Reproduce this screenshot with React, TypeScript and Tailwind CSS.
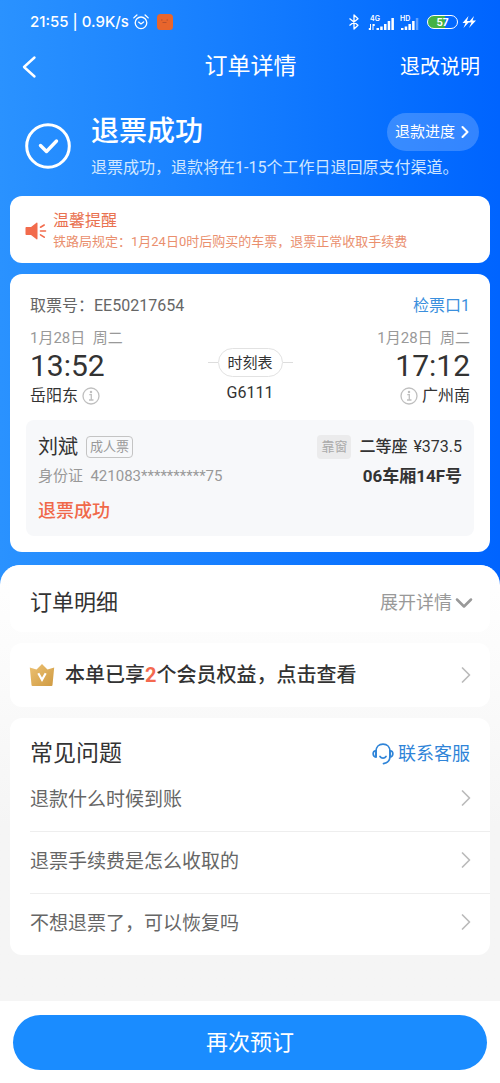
import { ChevronDown, ChevronRight } from "lucide-react";

const faqs = [
  "退款什么时候到账",
  "退票手续费是怎么收取的",
  "不想退票了\uFF0C可以恢复吗",
];

function StatusBar() {
  return (
    <div className="flex h-11 items-center justify-between pr-6 pl-[30px]">
      <div className="flex items-center gap-1">
        <span className="font-['Inter'] text-[15px] font-medium">
          21:55 | 0.9K/s
        </span>
        <svg viewBox="0 0 16 16" className="h-4 w-4" fill="none" stroke="currentColor" strokeWidth="1.3" strokeLinecap="round" aria-hidden>
          <circle cx="8" cy="8.8" r="5.8" />
          <path d="M.8 3.9 3.9 1M15.2 3.9 12.1 1M5.6 8.1 8 10l2.6-2" />
        </svg>
        <svg viewBox="0 0 16 16" className="ml-1 h-4 w-4" aria-hidden>
          <rect width="16" height="16" rx="3.5" fill="#e8652c" />
          <path d="M4 6h1.500M9.500 6H11M5.500 8.500h4" stroke="#b8502c" strokeWidth="1.2" />
        </svg>
      </div>

      <div className="flex items-center">
        <svg viewBox="0 0 12 16" className="h-4 w-3" fill="none" stroke="currentColor" strokeWidth="1.3" strokeLinejoin="round" aria-hidden>
          <path d="M1.5 4.5 10 11.2 6 15V1l4 3.8-8.5 6.7" />
        </svg>
        <div className="ml-2 flex flex-col font-['Inter'] text-[7px] leading-[7px] font-semibold">
          <span className="pl-0.5">4G</span>
          <svg viewBox="0 0 26 12" className="-mt-1 h-3 w-[26px]" fill="currentColor" aria-hidden>
            <path d="M2 6h1v6H2zM.8 10H2v2H.8zM4.500 6h1v6h-1zM5.500 6h1.200v2H5.500zM8.500 10H11v2H8.500zM12.200 8.500h2.500V12h-2.500zM16 6h2.500v6H16zM19.700 3h2.500v9h-2.500zM23.400 0h2.500v12h-2.500z" />
          </svg>
        </div>
        <div className="ml-1.5 flex flex-col font-['Inter'] text-[7px] leading-[7px] font-semibold">
          <span>HD</span>
          <svg viewBox="0 0 19 12" className="-mt-1 h-3 w-[19px]" fill="currentColor" aria-hidden>
            <path d="M1 10h2.500v2H1zM4.700 8.500h2.500V12H4.700zM8.400 6h2.500v6H8.400zM12.100 3h2.500v9h-2.500z" />
            <path d="M15.800 0h2.500v12h-2.500z" opacity=".35" />
          </svg>
        </div>
        <div className="ml-2 flex h-[14px] w-[31px] items-center justify-center rounded-full border border-white bg-linear-to-r from-[#44b244] from-57% to-transparent to-57% font-['Inter'] text-[10px] leading-none font-bold">
          57
        </div>
        <svg viewBox="0 0 14 12" className="ml-1 h-3 w-[14px]" fill="currentColor" aria-hidden>
          <path d="M6.500 0 .5 7h3L1.500 12 8 5H5zM12 0 6.500 6.500h3L7 12l7-7.500h-3.500z" />
        </svg>
      </div>
    </div>
  );
}

function InfoIcon() {
  return (
    <svg viewBox="0 0 18 18" className="h-[18px] w-[18px]" fill="none" stroke="#bfbfbf" strokeWidth="1.3" aria-hidden>
      <circle cx="9" cy="9" r="8" />
      <path d="M7.300 7.700H9.300V13M7 13h4.500" />
      <circle cx="9" cy="5" r=".6" fill="#bfbfbf" />
    </svg>
  );
}

function Notice() {
  return (
    <section className="mx-2.5 flex items-center gap-1.5 rounded-xl bg-white pt-3.5 pb-3 pl-[15px]">
      <svg viewBox="0 0 22 20" className="h-5 w-[22px]" fill="#f26b4c" aria-hidden>
        <path d="M1.500 6H6l5.500-4.200c.5-.4 1-.1 1 .5v15.400c0 .6-.5.900-1 .5L6 14H1.500C.9 14 .5 13.600.5 13V7c0-.6.4-1 1-1z" />
        <path d="M15.500 6.200 19.200 4M15.500 10h5M15.500 13.800l3.700 2.400" stroke="#f26b4c" strokeWidth="1.600" strokeLinecap="round" />
      </svg>
      <div>
        <h2 className="text-base leading-[22px] text-[#e9714f]">温馨提醒</h2>
        <p className="text-[13px] leading-[19px] text-[#ea8f6e]">
          铁路局规定&#xFF1A;1月24日0时后购买的车票&#xFF0C;退票正常收取手续费
        </p>
      </div>
    </section>
  );
}

function Ticket() {
  return (
    <section className="mx-2.5 mt-[11px] rounded-xl bg-white px-4 pt-5 pb-4 text-[#333]">
      <div className="flex justify-between px-1 text-base leading-6">
        <span className="text-[#666]">取票号&#xFF1A;EE50217654</span>
        <a href="#gate" className="text-[#3a8fdd]">检票口1</a>
      </div>

      <div className="mt-2.5 flex justify-between px-1">
        <div className="flex-1">
          <p className="text-[15px] leading-5 text-[#999]">1月28日&nbsp; 周二</p>
          <p className="text-[30px] leading-9">13:52</p>
          <p className="flex items-center gap-1 text-base leading-6">
            岳阳东 <InfoIcon />
          </p>
        </div>
        <div className="flex flex-col items-center pt-5">
          <div className="flex items-center">
            <span className="h-px w-2.5 bg-[#ddd]" />
            <button className="h-[29px] rounded-full border border-[#e2e2e2] px-[9px] text-[15px] leading-5">
              时刻表
            </button>
            <span className="h-px w-2.5 bg-[#ddd]" />
          </div>
          <p className="mt-1 text-base leading-6">G6111</p>
        </div>
        <div className="flex flex-1 flex-col items-end">
          <p className="text-[15px] leading-5 text-[#999]">1月28日&nbsp; 周二</p>
          <p className="text-[30px] leading-9">17:12</p>
          <p className="flex items-center gap-1 text-base leading-6">
            <InfoIcon /> 广州南
          </p>
        </div>
      </div>

      <div className="mt-3 flex justify-between rounded-lg bg-[#f7f8fa] px-3 pt-3.5 pb-3">
        <div>
          <div className="flex items-center gap-2 text-xl leading-[26px]">
            刘斌
            <span className="rounded border border-[#c4c4c4] px-[3px] text-[13px] leading-5 text-[#999]">
              成人票
            </span>
          </div>
          <p className="mt-1 text-[15px] leading-6 text-[#999]">
            身份证&nbsp; 421083**********75
          </p>
          <p className="mt-2.5 text-lg leading-[26px] font-medium text-[#f0694a]">
            退票成功
          </p>
        </div>
        <div className="flex flex-col items-end">
          <div className="flex items-center text-base leading-[26px]">
            <span className="mr-2 rounded bg-[#ebebec] px-1 text-[13px] leading-6 text-[#aaa]">
              靠窗
            </span>
            <span className="font-medium">二等座</span>
            <span className="ml-1.5">¥373.5</span>
          </div>
          <p className="mt-1 text-[17px] leading-6 font-bold">06车厢14F号</p>
        </div>
      </div>
    </section>
  );
}

function CrownIcon() {
  return (
    <svg viewBox="0 0 26 24" className="h-6 w-[26px]" aria-hidden>
      <defs>
        <linearGradient id="crown" x1="0" y1="0" x2="1" y2="1">
          <stop offset="0" stopColor="#edc274" />
          <stop offset="1" stopColor="#cf9a41" />
        </linearGradient>
      </defs>
      <path d="M.8 4.500 7.500 6.500 13 1l5.500 5.500 6.700-2L23.500 22q-.1 1-1 1h-19q-.9 0-1-1z" fill="url(#crown)" />
      <path d="m9.300 10.200 3.700 6.600 3.700-6.600" fill="none" stroke="#fff" strokeWidth="2.200" />
    </svg>
  );
}

function HeadsetIcon() {
  return (
    <svg viewBox="0 0 22 22" className="h-[22px] w-[22px]" fill="none" stroke="currentColor" strokeWidth="1.700" strokeLinecap="round" strokeLinejoin="round" aria-hidden>
      <path d="M4 14V8.500C4 4 7 1.200 11 1.200S18 4 18 8.500V13c0 4-2.500 7-6.500 7.600" />
      <path d="M4 7.500C.2 8 .2 13.500 4 14zM18 7.500c3.800.5 3.800 6 0 6.500z" />
      <path d="M8 13.500c1.500 2.200 4.500 2.200 6 0" />
    </svg>
  );
}

export default function App() {
  return (
    <div className="flex min-h-screen flex-col bg-linear-to-r from-[#2a92ff] to-[#0064ff] font-['Roboto','Noto_Sans_CJK_SC',sans-serif] text-white">
      <StatusBar />

      <header className="grid h-[46px] grid-cols-3 items-center pr-5 pl-[21px]">
        <button aria-label="返回" className="w-fit">
          <svg viewBox="0 0 16 24" className="h-6 w-4" fill="none" stroke="currentColor" strokeWidth="2.400" strokeLinecap="round" strokeLinejoin="round" aria-hidden>
            <path d="M13.500 2.500 3 12l10.500 9.500" />
          </svg>
        </button>
        <h1 className="text-center text-[23px] leading-8">订单详情</h1>
        <a href="#rules" className="text-right text-xl leading-8">退改说明</a>
      </header>

      <section className="flex items-center gap-5 pt-[22px] pr-[21px] pb-4 pl-[25px]">
        <svg viewBox="0 0 46 46" className="h-[46px] w-[46px] shrink-0" fill="none" stroke="currentColor" strokeLinecap="round" strokeLinejoin="round" aria-hidden>
          <circle cx="23" cy="23" r="21.300" strokeWidth="3" />
          <path d="m15.500 22.500 6 6L31.500 18" strokeWidth="3.400" />
        </svg>
        <div className="flex-1">
          <div className="flex items-center justify-between">
            <h2 className="text-[28px] leading-10 font-medium">退票成功</h2>
            <button className="flex h-[38px] items-center rounded-full bg-white/20 pr-1 pl-2 text-[15px]">
              退款进度
              <ChevronRight className="h-5 w-5" strokeWidth={2.5} aria-hidden />
            </button>
          </div>
          <p className="mt-1 text-base leading-6 whitespace-nowrap text-[#cfe6ff]">
            退票成功&#xFF0C;退款将在1-15个工作日退回原支付渠道。
          </p>
        </div>
      </section>

      <Notice />
      <Ticket />

      <main className="mt-[13px] flex flex-1 flex-col gap-[11px] overflow-hidden rounded-t-[20px] bg-linear-to-b from-white to-[#f5f5f5] to-60% px-2.5 text-[#333]">
        <section className="flex h-[67px] items-center justify-between rounded-b-xl bg-white pt-2 pr-3 pl-5">
          <h2 className="text-[22px] leading-8">订单明细</h2>
          <button className="flex items-center text-lg text-[#999]">
            展开详情
            <ChevronDown className="-ml-0.5 h-7 w-7" strokeWidth={2.2} aria-hidden />
          </button>
        </section>

        <a href="#benefits" className="flex h-16 items-center rounded-xl bg-white pr-2.5 pl-[19px] text-xl font-medium">
          <CrownIcon />
          <span className="ml-2.5 flex-1">
            本单已享<span className="font-bold text-[#f4694f]">2</span>个会员权益&#xFF0C;点击查看
          </span>
          <ChevronRight className="h-7 w-7 text-[#bbb]" strokeWidth={1.5} aria-hidden />
        </a>

        <section className="rounded-xl bg-white pt-5 pl-5">
          <div className="flex items-center justify-between pr-5">
            <h2 className="text-[23px] leading-8">常见问题</h2>
            <a href="#service" className="flex items-center gap-1 text-lg text-[#2f84d8]">
              <HeadsetIcon />
              联系客服
            </a>
          </div>
          <ul className="divide-y divide-[#eee]">
            {faqs.map((q) => (
              <li key={q}>
                <a href="#faq" className="flex h-[61px] items-center justify-between pr-2.5 text-[19px] text-[#666]">
                  {q}
                  <ChevronRight className="mb-1.5 h-7 w-7 text-[#bbb]" strokeWidth={1.5} aria-hidden />
                </a>
              </li>
            ))}
          </ul>
        </section>
      </main>

      <footer className="bg-white px-[13px] pt-3.5 pb-[13px]">
        <button className="h-[55px] w-full rounded-full bg-[#1a8cff] text-[22px]">
          再次预订
        </button>
      </footer>
    </div>
  );
}
